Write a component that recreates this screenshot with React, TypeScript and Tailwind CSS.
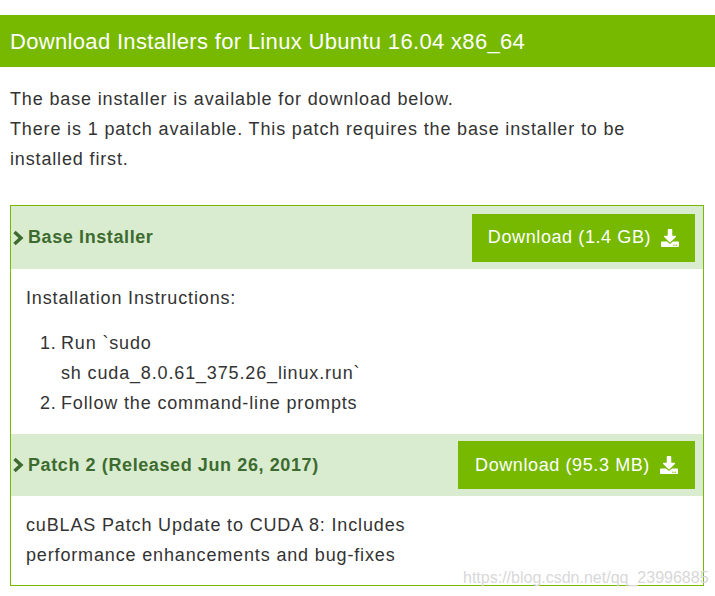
import React from 'react';
import { FaDownload } from 'react-icons/fa';

const font = { fontFamily: '"Liberation Sans", Arial, sans-serif' };

const Chevron: React.FC = () => (
    <svg width="12" height="16" viewBox="0 0 12 16" className="shrink-0">
        <polyline points="2.5,2 9,8 2.5,14" fill="none" stroke="#3d6b2f" strokeWidth="3.4" />
    </svg>
);

interface RowProps {
    title: string;
    label: string;
    height: string;
    btnWidth: string;
}

const SectionRow: React.FC<RowProps> = ({ title, label, height, btnWidth }) => (
    <div className={`${height} bg-[#d9ecd0] flex items-center justify-between pl-[1px] pr-[8px]`}>
        <div className="flex items-center gap-[4px]">
            <Chevron />
            <span className="text-[18px] font-bold tracking-[0.6px] text-[#3d6b2f]">{title}</span>
        </div>
        <button className={`${btnWidth} h-[48px] bg-[#76b900] text-white text-[18px] tracking-[0.6px] flex items-center justify-center gap-[10px]`}>
            {label} <FaDownload className="w-[18px] h-[18px]" />
        </button>
    </div>
);

export default function App() {
    return (
        <div className="w-[715px] h-[596px] bg-white relative overflow-hidden text-[#333] tracking-[0.85px]" style={font}>
            <div className="mt-[15px] h-[52px] bg-[#76b900] flex items-center px-[10px]">
                <h1 className="text-white text-[22px] font-medium tracking-[0.33px]">Download Installers for Linux Ubuntu 16.04 x86_64</h1>
            </div>

            <p className="mt-[17px] px-[10px] text-[18px] leading-[30px]">
                The base installer is available for download below.<br />
                There is 1 patch available. This patch requires the base installer to be<br />
                installed first.
            </p>

            <div className="mt-[31px] ml-[10px] mr-[11px] border border-[#76b900]">
                <SectionRow title="Base Installer" label="Download (1.4 GB)" height="h-[63px]" btnWidth="w-[223px]" />
                <div className="pt-[14px] pb-[16px] pl-[15px] text-[18px] leading-[30px]">
                    <div>Installation Instructions:</div>
                    <div className="mt-[15px] pl-[14px]">
                        <div className="flex">
                            <span className="w-[21px]">1.</span>
                            <span>Run `sudo<br />sh cuda_8.0.61_375.26_linux.run`</span>
                        </div>
                        <div className="flex">
                            <span className="w-[21px]">2.</span>
                            <span>Follow the command-line prompts</span>
                        </div>
                    </div>
                </div>
                <SectionRow title="Patch 2 (Released Jun 26, 2017)" label="Download (95.3 MB)" height="h-[62px]" btnWidth="w-[237px]" />
                <div className="pt-[14px] pb-[15px] pl-[15px] text-[18px] leading-[30px]">
                    cuBLAS Patch Update to CUDA 8: Includes<br />
                    performance enhancements and bug-fixes
                </div>
            </div>

            <div className="absolute left-[463px] top-[566px] text-[16px] tracking-normal text-[#d8d8d8] whitespace-nowrap" style={{ fontFamily: '"Liberation Sans", Arial, sans-serif' }}>
                https://blog.csdn.net/qq_23996885
            </div>
        </div>
    );
}
